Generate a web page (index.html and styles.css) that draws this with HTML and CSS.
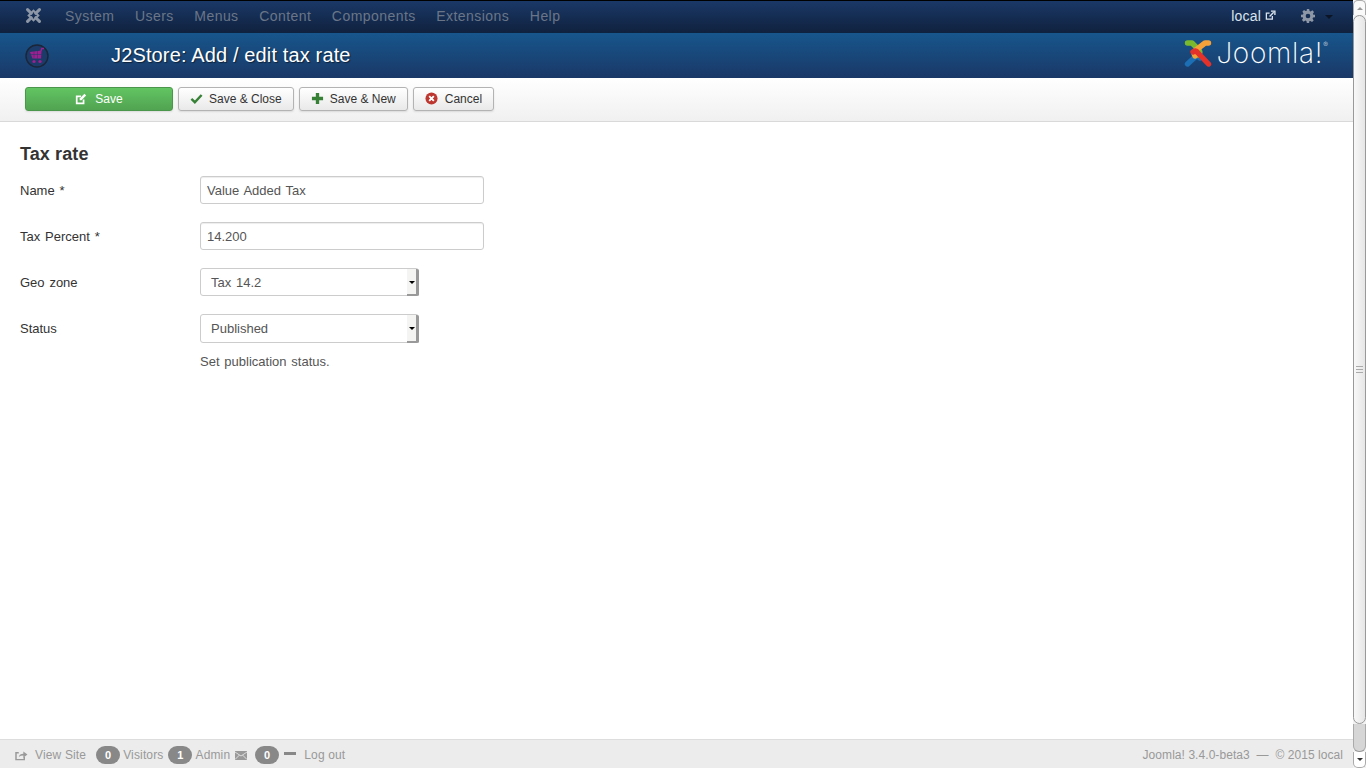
FILE: index.html
```html
<!DOCTYPE html>
<html lang="en">
<head>
  <meta charset="UTF-8" />
  <title>J2Store: Add / edit tax rate</title>
  <link rel="stylesheet" href="styles.css">
</head>
<body>
  <div class="page">
    <nav class="topnav">
      <svg class="nav-logo" viewBox="0 0 30 30" width="17" height="17">
        <g fill="none" stroke="#8d97a6" stroke-linecap="round">
          <path stroke-width="5.5" d="M4.5 4.5 L11 11 M25.5 4.5 L19 11 M4.5 25.5 L11 19 M25.5 25.5 L19 19" />
          <path stroke-width="3.6" d="M15 6.5 L23.5 15 L15 23.5 L6.5 15 Z" />
        </g>
      </svg>
      <ul class="nav-menu">
        <li>System</li>
        <li>Users</li>
        <li>Menus</li>
        <li>Content</li>
        <li>Components</li>
        <li>Extensions</li>
        <li>Help</li>
      </ul>
      <div class="nav-right">
        <span class="nav-site">local
          <svg class="ext-icon" viewBox="0 0 12 12" width="11" height="11">
            <path d="M8 6.5 V10 H1.5 V3.5 H5" fill="none" stroke="#dbe3ec" stroke-width="1.4" />
            <path d="M5 7 L9.5 2.5 M6.5 1.2 H10.8 V5.5" fill="none" stroke="#dbe3ec" stroke-width="1.5" />
          </svg>
        </span>
        <svg class="gear" viewBox="0 0 24 24" width="14" height="14">
          <path fill="#8d97a6" fill-rule="evenodd" d="M10 0h4l.7 3.4 1.9.8 2.9-1.9 2.8 2.8-1.9 2.9.8 1.9L24 10v4l-3.4.7-.8 1.9 1.9 2.9-2.8 2.8-2.9-1.9-1.9.8L14 24h-4l-.7-3.4-1.9-.8-2.9 1.9-2.8-2.8 1.9-2.9-.8-1.9L0 14v-4l3.4-.7.8-1.9-1.9-2.9 2.8-2.8 2.9 1.9 1.9-.8zM12 8a4 4 0 1 0 0 8 4 4 0 0 0 0-8z" />
        </svg>
        <span class="caret-dark"></span>
      </div>
    </nav>

    <header class="titlebar">
      <svg class="cart-badge" viewBox="0 0 24 24" width="24" height="24">
        <circle cx="12" cy="12" r="11" fill="#1c3b69" stroke="#1b2638" stroke-width="1.4" />
        <path fill="#a01f90" d="M5 8 L16.5 6.5 L16 14.5 H7.5 Z" />
        <path fill="none" stroke="#a01f90" stroke-width="1.4" d="M16 7 L16.8 4.5 H19" />
        <path fill="none" stroke="#1c3b69" stroke-width=".5" d="M9 7.5 V14.5 M12.5 7 V14.5 M6 10.5 H16.5" />
        <circle cx="9" cy="17.5" r="1.6" fill="#a01f90" />
        <circle cx="15" cy="17.5" r="1.6" fill="#a01f90" />
      </svg>
      <h1 class="page-title">J2Store: Add / edit tax rate</h1>
      <div class="brand">
        <svg class="brand-mark" viewBox="0 0 30 30" width="30" height="30">
          <g fill="none" stroke-width="5.4" stroke-linecap="round" stroke-linejoin="round">
            <path stroke="#1c6fb4" d="M4.5 26 L11 20 Q14 17 17 20" />
            <path stroke="#7ab92e" d="M4.5 5 L9 5 L16 12 Q18 15 15 17" />
            <path stroke="#f4a13a" d="M25.5 5 L22 5 L13 12 Q10 15 12 18" />
            <path stroke="#e4322b" d="M25.5 26 L15 15 Q13 12 10 14" />
          </g>
        </svg>
        <span class="brand-name">Joomla!<sup class="brand-reg">&reg;</sup></span>
      </div>
    </header>

    <div class="toolbar">
      <button class="btn btn-save">
        <svg viewBox="0 0 14 14" width="12" height="12"><path d="M10 7.5 V12 H2 V4 H7" fill="none" stroke="#fff" stroke-width="2" /><path d="M5.5 8.5 L5.5 6.5 L11 1 L13 3 L7.5 8.5 Z" fill="#fff" /></svg>
        Save
      </button>
      <button class="btn">
        <svg viewBox="0 0 14 14" width="13" height="13"><path d="M1.5 7.5 L5.2 11 L12.5 3.2" fill="none" stroke="#378137" stroke-width="2.6" /></svg>
        Save &amp; Close
      </button>
      <button class="btn">
        <svg viewBox="0 0 14 14" width="13" height="13"><path d="M7 1 V13 M1 7 H13" fill="none" stroke="#378137" stroke-width="3.6" /></svg>
        Save &amp; New
      </button>
      <button class="btn btn-cancel">
        <svg viewBox="0 0 14 14" width="13" height="13"><circle cx="7" cy="7" r="6.5" fill="#bd362f" /><path d="M4.5 4.5 L9.5 9.5 M9.5 4.5 L4.5 9.5" stroke="#fff" stroke-width="2" /></svg>
        Cancel
      </button>
    </div>

    <main class="content">
      <h2 class="form-title">Tax rate</h2>
      <form class="form">
        <div class="form-row">
          <label class="form-label">Name *</label>
          <input class="form-input" type="text" value="Value Added Tax">
        </div>
        <div class="form-row">
          <label class="form-label">Tax Percent *</label>
          <input class="form-input" type="text" value="14.200">
        </div>
        <div class="form-row">
          <label class="form-label">Geo zone</label>
          <div class="select-wrap">
            <select class="form-select"><option>Tax 14.2</option></select>
            <span class="select-arrow"></span>
          </div>
        </div>
        <div class="form-row form-row-last">
          <label class="form-label">Status</label>
          <div class="select-wrap select-tall">
            <select class="form-select"><option>Published</option></select>
            <span class="select-arrow"></span>
          </div>
        </div>
        <p class="form-help">Set publication status.</p>
      </form>
    </main>

    <footer class="statusbar">
      <svg class="status-icon" viewBox="0 0 14 12" width="13" height="11"><path d="M10 7.5 V10.5 H1 V3 H4" fill="none" stroke="#999" stroke-width="1.6" /><path d="M4 7.5 Q5 4 9 4 V1.5 L13.5 5 L9 8.5 V6 Q6 6 4 7.5 Z" fill="#999" /></svg>
      <span class="status-view">View Site</span>
      <span class="badge">0</span>
      <span class="status-text">Visitors</span>
      <span class="badge">1</span>
      <span class="status-text">Admin</span>
      <svg class="status-mail" viewBox="0 0 12 9" width="12" height="9"><rect width="12" height="9" fill="#999" /><path d="M0 1 L6 5 L12 1 M0 8.5 L4.5 4 M12 8.5 L7.5 4" fill="none" stroke="#ececec" stroke-width=".8" /></svg>
      <span class="badge badge-mail">0</span>
      <span class="status-dash"></span>
      <span class="status-logout">Log out</span>
      <span class="status-version">Joomla! 3.4.0-beta3 &nbsp;&mdash;&nbsp; &copy; 2015 local</span>
    </footer>
  </div>

  <div class="scrollbar">
    <div class="scroll-btn scroll-btn-up"><span class="arrow-up"></span></div>
    <div class="scroll-thumb"><span class="grip"></span></div>
    <div class="scroll-track"></div>
    <div class="scroll-btn scroll-btn-down"><span class="arrow-down"></span></div>
  </div>
</body>
</html>
```

FILE: styles.css
```css
html, body {
  height: 100%;
}

body {
  margin: 0;
  display: flex;
  overflow: hidden;
  background-color: #fff;
  color: #333;
  font-family: "Liberation Sans", Arial, sans-serif;
  font-size: 13px;
}

.page {
  flex: 1;
  min-width: 0;
  display: flex;
  flex-direction: column;
}

/* top nav */
.topnav {
  height: 32px;
  flex: none;
  box-sizing: border-box;
  display: flex;
  align-items: center;
  padding-bottom: 2px;
  border-top: 1px solid #000;
  background: linear-gradient(#1a3867, #10223f);
  font-size: 14px;
}

.nav-logo {
  margin-left: 25px;
}

.nav-menu {
  display: flex;
  gap: 20.55px;
  list-style: none;
  margin: 0 0 0 23px;
  padding: 0;
  color: #6a7688;
  letter-spacing: .45px;
}

.nav-right {
  margin-left: auto;
  display: flex;
  align-items: center;
  padding-right: 20px;
}

.nav-site {
  color: #dbe3ec;
  display: flex;
  align-items: center;
  gap: 4px;
  letter-spacing: .2px;
  margin-right: -1px;
}

.gear {
  margin-left: 26px;
}

.caret-dark {
  margin-left: 10px;
  margin-top: 2px;
  border-left: 4px solid transparent;
  border-right: 4px solid transparent;
  border-top: 4px solid #0b1526;
}

/* title bar */
.titlebar {
  height: 46px;
  flex: none;
  display: flex;
  align-items: center;
  background: linear-gradient(#17568c, #1a3867);
  border-top: 1px solid #0e2340;
  box-sizing: border-box;
}

.cart-badge {
  margin-left: 25px;
}

.page-title {
  margin: 0 0 0 62px;
  font-size: 20px;
  font-weight: normal;
  letter-spacing: .14px;
  color: #fff;
  text-shadow: 1px 1px 1px rgba(0,0,0,0.5);
}

.brand {
  margin-left: auto;
  display: flex;
  align-items: center;
  gap: 3px;
  padding-right: 25px;
  margin-top: -5px;
}

.brand-name {
  font-family: Inter, sans-serif;
  font-weight: 200;
  font-size: 28px;
  line-height: 32px;
  letter-spacing: .7px;
  color: #fff;
}

.brand-reg {
  font-size: 7px;
  line-height: 0;
  vertical-align: 16px;
  letter-spacing: 0;
}

/* toolbar */
.toolbar {
  height: 44px;
  flex: none;
  box-sizing: border-box;
  display: flex;
  align-items: center;
  gap: 5px;
  padding: 0 0 2px 25px;
  background: linear-gradient(#fff, #f0f0f0);
  border-bottom: 1px solid #d9d9d9;
}

.btn {
  height: 24px;
  box-sizing: border-box;
  display: flex;
  align-items: center;
  gap: 6px;
  padding: 0 11px;
  border: 1px solid #b3b3b3;
  border-radius: 3px;
  background: linear-gradient(#fff, #e9e9e9);
  box-shadow: 0 1px 2px rgba(0,0,0,0.1);
  color: #333;
  font-family: inherit;
  font-size: 12px;
}

.btn-save {
  width: 148px;
  gap: 8px;
  justify-content: center;
  background: linear-gradient(#62c462, #51a351);
  border-color: #4a964a;
  color: #fff;
}

.btn-cancel {
  gap: 7px;
}

/* form */
.content {
  flex: 1;
  padding: 22px 20px 0;
}

.form-title {
  margin: 0 0 12px;
  font-size: 18px;
  line-height: 20px;
  letter-spacing: .1px;
}

.form {
  word-spacing: 1.2px;
}

.form-row {
  display: flex;
  align-items: center;
  margin-bottom: 18px;
}

.form-row-last {
  margin-bottom: 11px;
}

.form-label {
  width: 180px;
  flex: none;
}

.form-input {
  width: 284px;
  height: 28px;
  box-sizing: border-box;
  padding: 0 6px;
  border: 1px solid #ccc;
  border-radius: 3px;
  box-shadow: inset 0 1px 1px rgba(0,0,0,0.075);
  color: #555;
  font-family: inherit;
  font-size: 13px;
  word-spacing: 1.2px;
}

.select-wrap {
  position: relative;
  width: 219px;
  height: 28px;
}

.select-tall {
  height: 29px;
}

.form-select {
  width: 100%;
  height: 100%;
  box-sizing: border-box;
  padding: 0 0 0 10px;
  appearance: none;
  border: 1px solid #ccc;
  border-radius: 3px;
  background: #fff;
  color: #555;
  font-family: inherit;
  font-size: 13px;
  word-spacing: 1.2px;
}

.select-arrow {
  position: absolute;
  top: 1px;
  right: 0;
  bottom: 0;
  width: 12px;
  box-sizing: border-box;
  border-right: 3px solid #999;
  border-bottom: 2px solid #999;
  border-radius: 0 2px 2px 0;
  background: #f4f4f2;
}

.select-arrow::after {
  content: "";
  position: absolute;
  top: 12px;
  left: 2px;
  border-left: 3px solid transparent;
  border-right: 3px solid transparent;
  border-top: 3px solid #000;
}

.form-help {
  margin: 0 0 0 180px;
  color: #555;
}

/* footer */
.statusbar {
  height: 29px;
  flex: none;
  box-sizing: border-box;
  display: flex;
  align-items: center;
  padding: 2px 10px 0 15px;
  border-top: 1px solid #ddd;
  background-color: #ececec;
  color: #999;
  font-size: 12px;
  letter-spacing: .15px;
}

.status-view {
  margin-left: 7px;
  margin-right: 10px;
}

.badge {
  width: 24px;
  height: 18px;
  border-radius: 9px;
  background-color: #888;
  color: #fff;
  font-weight: bold;
  font-size: 11px;
  line-height: 18px;
  text-align: center;
}

.status-text {
  margin: 0 5px 0 3px;
}

.status-mail {
  margin-right: 8px;
}

.status-dash {
  width: 12px;
  height: 3px;
  margin: -4px 8px 0 5px;
  background-color: #888;
}

.status-version {
  margin-left: auto;
  letter-spacing: .06px;
}

/* scrollbar */
.scrollbar {
  width: 13px;
  flex: none;
  display: flex;
  flex-direction: column;
  background-color: #f2f2f2;
}

.scroll-btn {
  height: 16px;
  flex: none;
  display: flex;
  align-items: center;
  justify-content: center;
  box-sizing: border-box;
  border: 1px solid #aaa;
  background-color: #fafafa;
}

.scroll-btn-up {
  height: 15px;
  border-bottom: none;
  border-radius: 5px 5px 0 0;
}

.scroll-btn-down {
  border-top: none;
  border-radius: 0 0 5px 5px;
  background-color: #fff;
}

.arrow-up {
  border-left: 3px solid transparent;
  border-right: 3px solid transparent;
  border-bottom: 3px solid #999;
}

.arrow-down {
  border-left: 3px solid transparent;
  border-right: 3px solid transparent;
  border-top: 3px solid #333;
}

.scroll-thumb {
  height: 709px;
  flex: none;
  display: flex;
  align-items: center;
  justify-content: center;
  box-sizing: border-box;
  border: 1px solid #999;
  border-radius: 7px;
  background: linear-gradient(90deg, #f8f8f8, #e6e6e6);
}

.scroll-track {
  flex: 1;
  border-left: 1px solid #aaa;
  border-right: 1px solid #aaa;
  border-bottom: 1px solid #999;
  border-radius: 0 0 6px 6px;
  background-color: #d6d6d6;
}

.grip {
  width: 7px;
  height: 7px;
  background: repeating-linear-gradient(#aaa 0 1px, transparent 1px 3px);
}
```
